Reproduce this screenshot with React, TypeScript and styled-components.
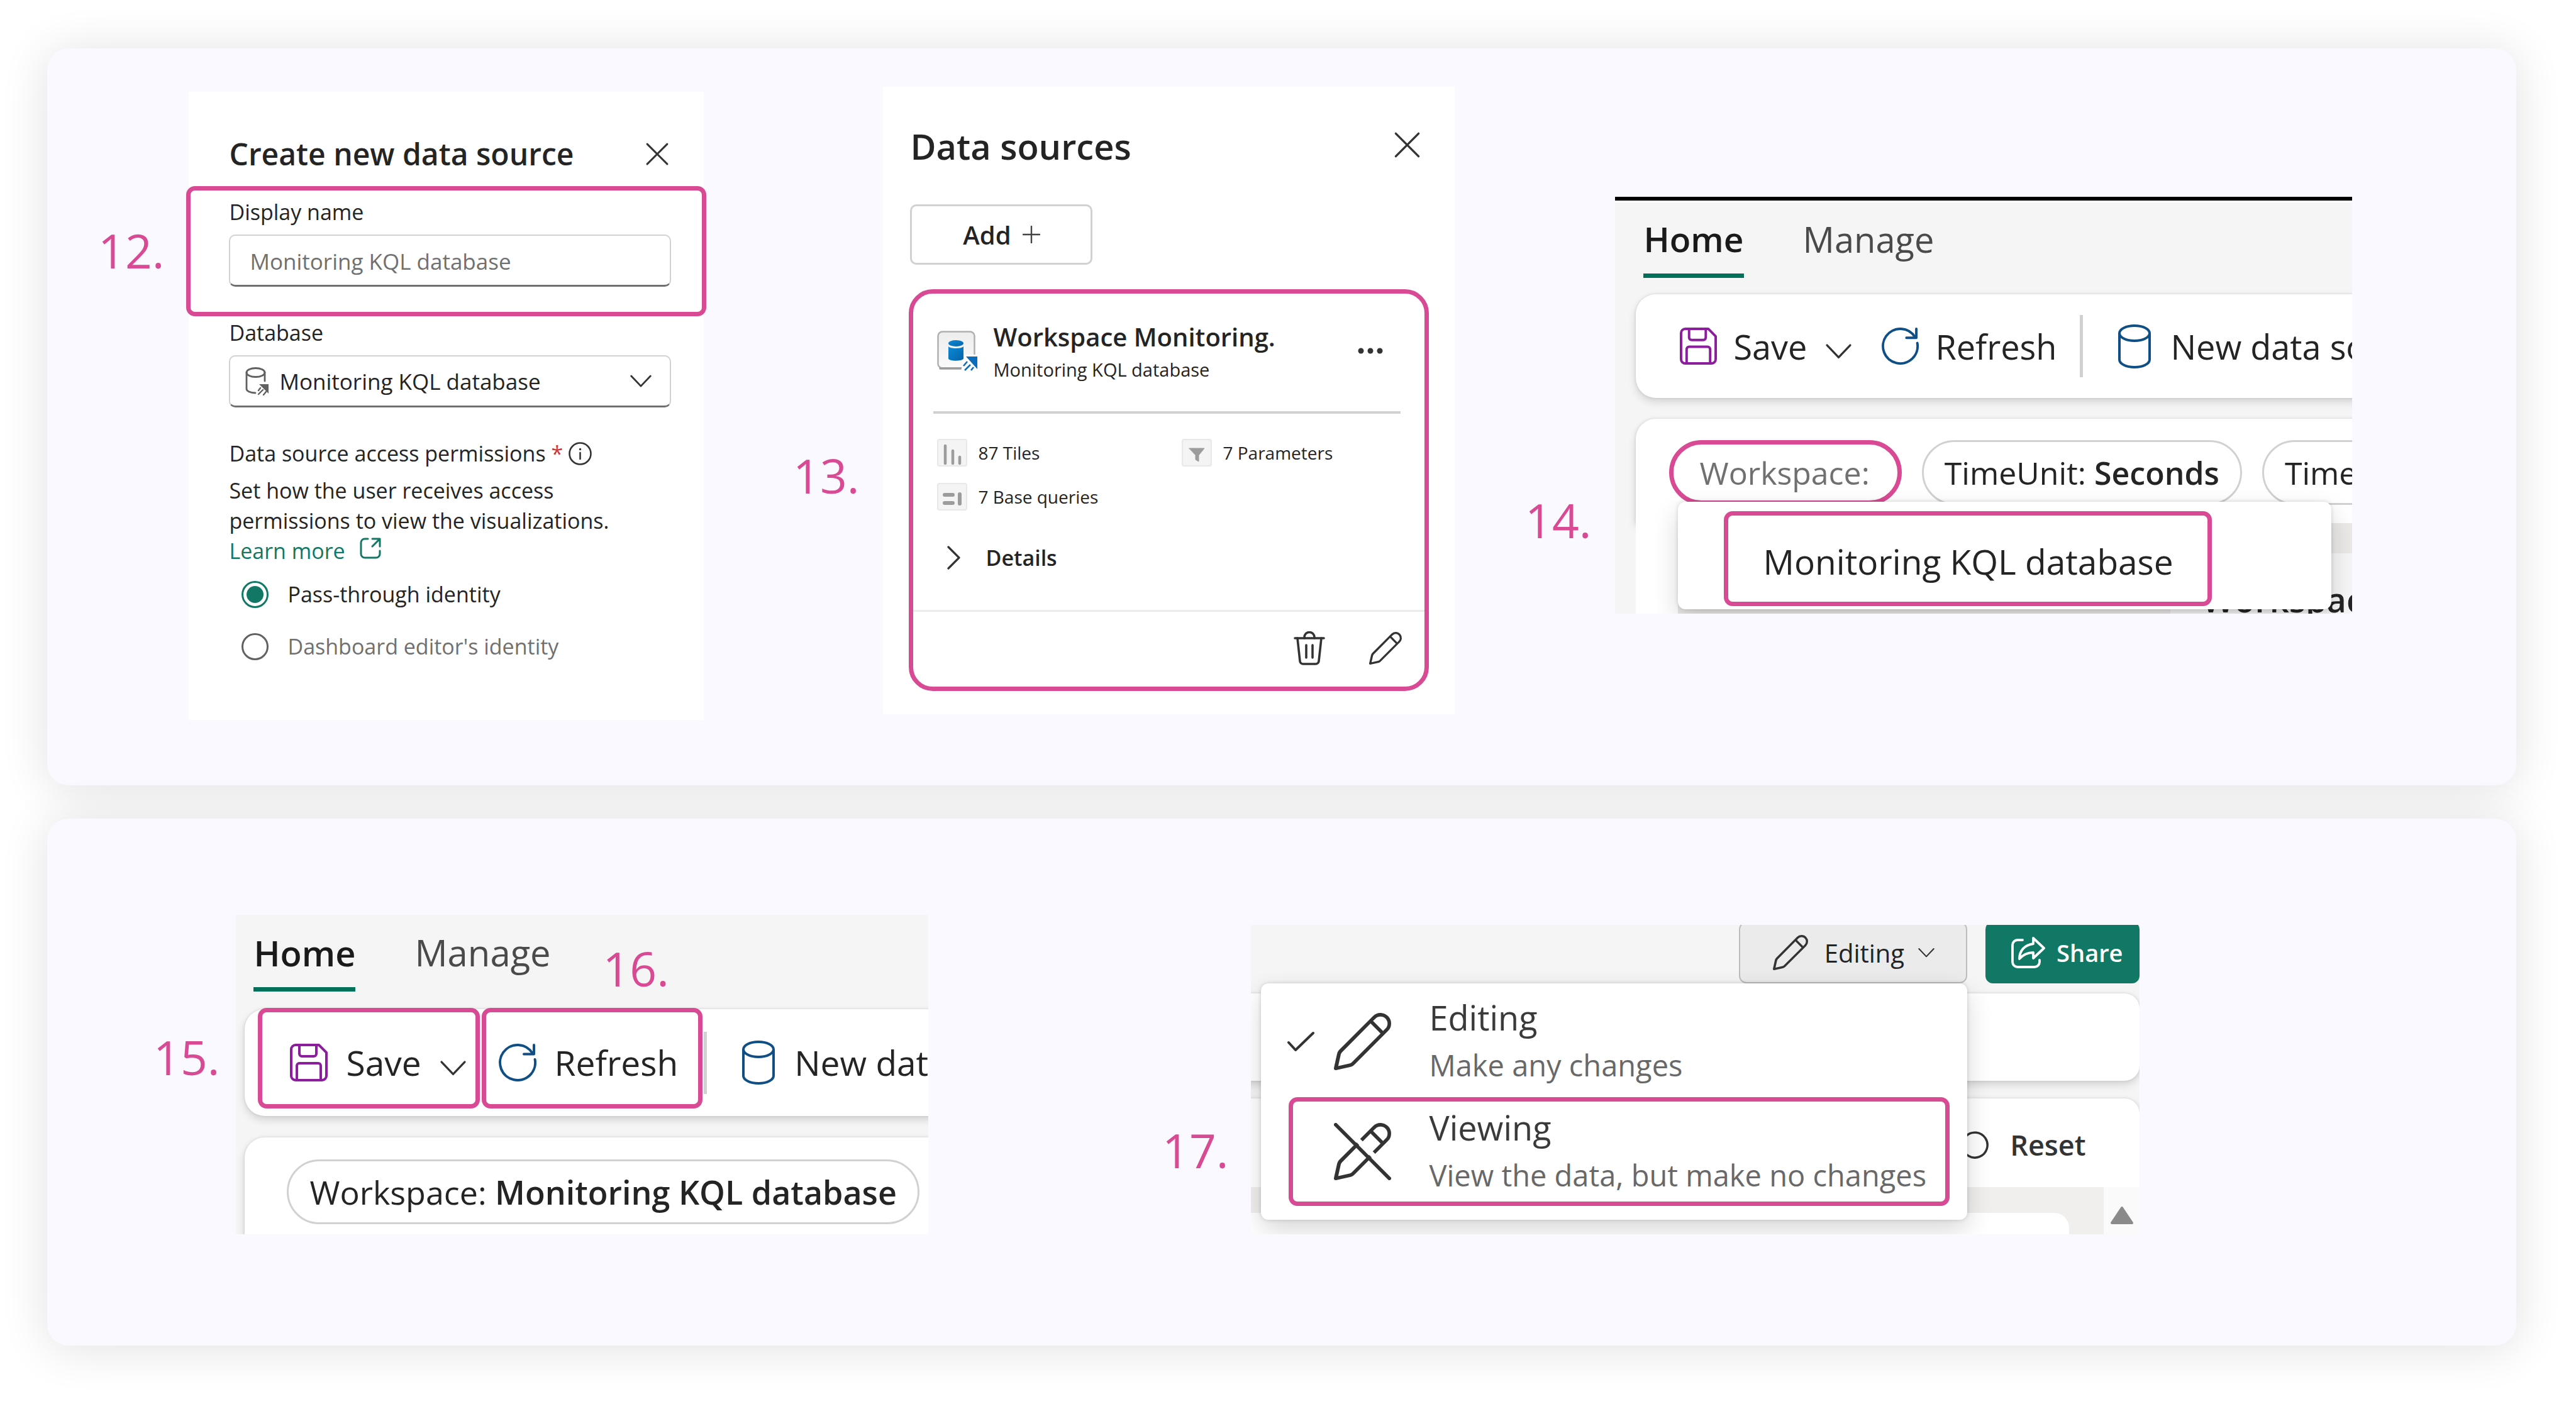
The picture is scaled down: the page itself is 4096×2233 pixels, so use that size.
import React from "react";
import styled, { createGlobalStyle, css } from "styled-components";

const color = {
  accent: "#d84b94",
  ink: "#242424",
  muted: "#707070",
  green: "#117865",
  line: "#d1d1d1",
  blue: "#0f4f85",
  purple: "#8c1d9c",
};

const GlobalStyle = createGlobalStyle`
  *, *::before, *::after { box-sizing: border-box; }
  body { margin: 0; background: #ffffff; }
  body, button, input, select {
    font-family: "Open Sans", "Noto Sans", sans-serif;
    color: ${color.ink};
  }
  button { background: none; border: 0; padding: 0; margin: 0; cursor: pointer; }
  h2, h3, p, fieldset, figure { margin: 0; padding: 0; border: 0; font-weight: 400; }
  svg { display: block; flex: none; }
`;

/* ---------- page ---------- */

const Page = styled.main`
  display: flex;
  flex-direction: column;
  gap: 53px;
  padding: 77px 95px 93px 75px;
`;

const Panel = styled.section<{ $columns: string; $pad: string }>`
  display: grid;
  grid-template-columns: ${(p) => p.$columns};
  align-items: start;
  padding: ${(p) => p.$pad};
  background: #f9f9ff;
  border-radius: 34px;
  box-shadow: 0 5px 76px rgba(0, 0, 0, 0.12);
`;

const Step = styled.div<{ $gap: number }>`
  display: flex;
  align-items: flex-start;
  gap: ${(p) => p.$gap}px;
`;

const StepNumber = styled.span<{ $drop: number }>`
  flex: none;
  margin-top: ${(p) => p.$drop}px;
  font-size: 75px;
  font-weight: 500;
  line-height: 100px;
  color: ${color.accent};
`;

const FloatingNumber = styled(StepNumber)`
  position: absolute;
  z-index: 2;
  top: 35px;
  left: 583px;
  margin-top: 0;
`;

const Callout = styled.span<{ $inset: string; $radius?: number }>`
  position: absolute;
  inset: ${(p) => p.$inset};
  border: 7px solid ${color.accent};
  border-radius: ${(p) => p.$radius ?? 14}px;
  pointer-events: none;
`;

const Sheet = styled.section<{ $width: number; $drop?: number; $pad: string }>`
  flex: 0 1 ${(p) => p.$width}px;
  margin-top: ${(p) => p.$drop ?? 0}px;
  padding: ${(p) => p.$pad};
  background: #ffffff;
`;

const Clip = styled.figure<{ $width: number; $height: number; $drop?: number }>`
  position: relative;
  flex: 0 1 ${(p) => p.$width}px;
  height: ${(p) => p.$height}px;
  margin-top: ${(p) => p.$drop ?? 0}px;
  overflow: hidden;
  background: #f5f5f5;
`;

const IconButton = styled.button`
  display: flex;
  flex: none;
  align-items: center;
  justify-content: center;
`;

/* ---------- icons ---------- */

type IconProps = { size: number; stroke?: string };

const Cross = ({ size }: IconProps) => (
  <svg width={size} height={size} viewBox="0 0 34 34" fill="none" stroke="#333" strokeWidth="2.8" strokeLinecap="round">
    <path d="M2 2l30 30M32 2L2 32" />
  </svg>
);

const ChevronDown = ({ size }: IconProps) => (
  <svg width={size} height={size / 2 + 4} viewBox="0 0 40 24" fill="none" stroke="#333" strokeWidth="3.2" strokeLinecap="round" strokeLinejoin="round">
    <path d="M2 2l18 19L38 2" />
  </svg>
);

const ChevronRight = () => (
  <svg width="21" height="38" viewBox="0 0 21 38" fill="none" stroke="#333" strokeWidth="3.2" strokeLinecap="round" strokeLinejoin="round">
    <path d="M2 2l17 17L2 36" />
  </svg>
);

const Plus = () => (
  <svg width="28" height="28" viewBox="0 0 28 28" fill="none" stroke="#444" strokeWidth="2.4" strokeLinecap="round">
    <path d="M14 1v26M1 14h26" />
  </svg>
);

const SaveIcon = ({ size }: IconProps) => (
  <svg width={size} height={size} viewBox="0 0 60 60" fill="none" stroke={color.purple} strokeWidth="4" strokeLinejoin="round">
    <path d="M9 2h37l12 12v37a7 7 0 0 1-7 7H9a7 7 0 0 1-7-7V9a7 7 0 0 1 7-7z" />
    <path d="M15 2v14a4 4 0 0 0 4 4h19a4 4 0 0 0 4-4V2" />
    <path d="M11 58V35a4 4 0 0 1 4-4h30a4 4 0 0 1 4 4v23" />
  </svg>
);

const RefreshIcon = ({ size }: IconProps) => (
  <svg width={size} height={size} viewBox="0 0 60 60" fill="none" stroke={color.blue} strokeWidth="4" strokeLinecap="round" strokeLinejoin="round">
    <path d="M57.6 25A28 28 0 1 1 54 15.500" />
    <path d="M56 2v14.500H40" />
  </svg>
);

const DatabaseIcon = ({ size }: IconProps) => (
  <svg width={size} height={(size * 70) / 52} viewBox="0 0 52 70" fill="none" stroke={color.blue} strokeWidth="4">
    <ellipse cx="26" cy="14" rx="24" ry="12" />
    <path d="M2 14v42c0 6.600 10.700 12 24 12s24-5.400 24-12V14" />
  </svg>
);

const PENCIL =
  "M17.18 2.93a2.97 2.97 0 0 0-4.26-.06l-9.37 9.38c-.33.33-.56.74-.66 1.200l-.88 3.940a.5.5 0 0 0 .6.6l3.920-.87c.46-.1.89-.34 1.220-.68l9.370-9.370a2.970 2.970 0 0 0 .06-4.140Zm-3.550.65a1.970 1.970 0 0 1 2.790 2.790l-.68.68-2.800-2.800.69-.67Zm-1.390 1.380 2.800 2.800-7.990 7.980c-.2.2-.45.34-.73.4l-3.120.7.69-3.100c.06-.28.2-.54.4-.75l7.950-8.030Z";

const PencilIcon = ({ size }: IconProps) => (
  <svg width={size} height={size} viewBox="2 2 16 16" fill="#333">
    <path d={PENCIL} />
  </svg>
);

const PencilOffIcon = ({ size }: IconProps) => (
  <svg width={size} height={size} viewBox="2 2 16 16" fill="#333">
    <path d={PENCIL} />
    <path d="M3.400 1.500L18.800 16.900" stroke="#fff" strokeWidth="1.400" />
    <path d="M2.500 2.500l15 15" stroke="#333" strokeWidth="1" strokeLinecap="round" />
  </svg>
);

const TrashIcon = () => (
  <svg width="50" height="54" viewBox="0 0 50 54" fill="none" stroke="#333" strokeWidth="3.600" strokeLinecap="round" strokeLinejoin="round">
    <path d="M2 11h46" />
    <path d="M17 11V9.500a8 8 0 0 1 16 0V11" />
    <path d="M6 11l4 36.500a5 5 0 0 0 5 4.500h20a5 5 0 0 0 5-4.500L44 11" />
    <path d="M20 22v20M30 22v20" />
  </svg>
);

const InfoIcon = () => (
  <svg width="37" height="37" viewBox="0 0 37 37" fill="none" stroke="#333" strokeWidth="2.600">
    <circle cx="18.500" cy="18.500" r="17" />
    <path d="M18.500 17v10" strokeLinecap="round" />
    <circle cx="18.500" cy="11.500" r="1" fill="#333" strokeWidth="1.500" />
  </svg>
);

const OpenIcon = () => (
  <svg width="34" height="34" viewBox="0 0 34 34" fill="none" stroke={color.green} strokeWidth="3" strokeLinecap="round" strokeLinejoin="round">
    <path d="M13 2H8a6 6 0 0 0-6 6v18a6 6 0 0 0 6 6h18a6 6 0 0 0 6-6v-5" />
    <path d="M20 2h12v12M32 2L20 14" />
  </svg>
);

const KqlIcon = () => (
  <svg width="38" height="45" viewBox="0 0 38 45" fill="none" stroke="#616161" strokeWidth="2.800" strokeLinecap="round">
    <ellipse cx="16.500" cy="8.500" rx="14.500" ry="7" />
    <path d="M2 8.500v26c0 3.500 6 6.500 14 6.500M31 8.500V22" />
    <path d="M22 27h15v15z" fill="#616161" stroke="none" />
    <path d="M24 33l-3 4M28 36l-7 7M33 39l-4 5" strokeWidth="2.400" />
  </svg>
);

const KqlTileIcon = () => (
  <svg width="64" height="64" viewBox="0 0 64 64">
    <defs>
      <linearGradient id="kqlFace" x1="0" y1="0" x2="0" y2="1">
        <stop offset="0" stopColor="#ededed" />
        <stop offset="1" stopColor="#fafafa" />
      </linearGradient>
      <linearGradient id="kqlBlue" x1="0" y1="0" x2="1" y2="1">
        <stop offset="0" stopColor="#0a8ad8" />
        <stop offset="1" stopColor="#0563a8" />
      </linearGradient>
    </defs>
    <rect x="1.500" y="1.500" width="58" height="58" rx="7" fill="url(#kqlFace)" stroke="#b0b0b0" strokeWidth="2.500" />
    <path d="M5 60h45" stroke="#9a9a9a" strokeWidth="3.500" strokeLinecap="round" />
    <ellipse cx="30" cy="20" rx="12" ry="5" fill="url(#kqlBlue)" />
    <path d="M18 25c3 4 21 4 24 0v19c0 5-24 5-24 0z" fill="url(#kqlBlue)" />
    <path d="M38 64L64 64V38H44z" fill="#fff" />
    <path d="M46 41h18v20z" fill="#0a6ebd" />
    <path d="M48 49l-6 7M53 54l-9 9M58 58l-4 5" stroke="#0a6ebd" strokeWidth="2.600" />
  </svg>
);

const StatIcon = ({ children }: { children: React.ReactNode }) => (
  <svg width="48" height="44" viewBox="0 0 48 44" fill="none" stroke="#9c9c9c" strokeLinecap="round">
    <rect x="1" y="1" width="46" height="42" rx="3" fill="#f4f4f4" stroke="#e8e8e8" strokeWidth="2" />
    {children}
  </svg>
);

const ShareIcon = () => (
  <svg width="54" height="50" viewBox="0 0 54 50" fill="none" stroke="#fff" strokeWidth="3.800" strokeLinecap="round" strokeLinejoin="round">
    <path d="M18 5h-8a8 8 0 0 0-8 8v27a8 8 0 0 0 8 8h27a8 8 0 0 0 8-8v-3" />
    <path d="M35 2l17 16-17 16v-9c-10 0-16 3-22 10 0-13 8-22 22-24z" />
  </svg>
);

const CheckIcon = () => (
  <svg width="43" height="33" viewBox="0 0 43 33" fill="none" stroke="#333" strokeWidth="4" strokeLinecap="round" strokeLinejoin="round">
    <path d="M2 18l11 12L41 3" />
  </svg>
);

const MoreIcon = () => (
  <svg width="40" height="10" viewBox="0 0 40 10" fill="#333">
    <circle cx="5" cy="5" r="4.500" />
    <circle cx="20" cy="5" r="4.500" />
    <circle cx="35" cy="5" r="4.500" />
  </svg>
);

/* ---------- create data source form ---------- */

const SheetHead = styled.header`
  display: flex;
  align-items: center;
  justify-content: space-between;
  padding-right: 4px;
`;

const FormTitle = styled.h2`
  font-size: 48px;
  font-weight: 600;
  line-height: 64px;
`;

const Field = styled.div<{ $top: number }>`
  position: relative;
  display: flex;
  flex-direction: column;
  gap: 12px;
  margin-top: ${(p) => p.$top}px;
`;

const bodyText = css`
  font-size: 34px;
  line-height: 48px;
`;

const FieldLabel = styled.label`
  ${bodyText}
`;

const control = css`
  width: 100%;
  height: 83px;
  border: 2px solid ${color.line};
  border-bottom: 3px solid #707070;
  border-radius: 10px;
  background: #ffffff;
  outline: 0;
  font-size: 35px;
  line-height: 48px;
`;

const TextInput = styled.input`
  ${control}
  padding: 3px 31px 0;
  &::placeholder { color: ${color.muted}; opacity: 1; }
`;

const SelectBox = styled.div`
  position: relative;
`;

const Select = styled.select`
  ${control}
  display: block;
  appearance: none;
  padding: 2px 78px 0;
`;

const SelectMark = styled.span<{ $side: "left" | "right" }>`
  position: absolute;
  top: 0;
  bottom: 0;
  ${(p) => p.$side}: ${(p) => (p.$side === "left" ? 26 : 31)}px;
  display: flex;
  align-items: center;
  pointer-events: none;
`;

const Permissions = styled.fieldset`
  margin-top: 49px;
  min-width: 0;
`;

const Legend = styled.div`
  display: flex;
  align-items: center;
  gap: 9px;
  ${bodyText}
`;

const Required = styled.span`
  color: #d13438;
`;

const Hint = styled.p`
  margin-top: 11px;
  max-width: 640px;
  ${bodyText}
`;

const LearnMore = styled.a`
  display: flex;
  gap: 23px;
  color: ${color.green};
  text-decoration: none;
  svg { margin-top: 3px; }
`;

const RadioRow = styled.label<{ $top: number; $muted?: boolean }>`
  display: flex;
  align-items: center;
  gap: 30px;
  margin-top: ${(p) => p.$top}px;
  padding-left: 20px;
  ${bodyText}
  color: ${(p) => (p.$muted ? color.muted : color.ink)};
`;

const Radio = styled.input`
  appearance: none;
  display: grid;
  place-items: center;
  flex: none;
  width: 43px;
  height: 43px;
  margin: 0;
  border: 3px solid #616161;
  border-radius: 50%;
  &:checked { border-color: ${color.green}; }
  &:checked::before {
    content: "";
    width: 27px;
    height: 27px;
    border-radius: 50%;
    background: ${color.green};
  }
`;

const CreateForm = () => (
  <Sheet $width={819} $drop={8} $pad="67px 52px 93px 64px">
    <SheetHead>
      <FormTitle>Create new data source</FormTitle>
      <IconButton aria-label="Close"><Cross size={36} /></IconButton>
    </SheetHead>
    <Field $top={36}>
      <FieldLabel htmlFor="display-name">Display name</FieldLabel>
      <TextInput id="display-name" placeholder="Monitoring KQL database" />
      <Callout $inset="-17px -56px -47px -68px" />
    </Field>
    <Field $top={49}>
      <FieldLabel htmlFor="database">Database</FieldLabel>
      <SelectBox>
        <Select id="database">
          <option>Monitoring KQL database</option>
        </Select>
        <SelectMark $side="left"><KqlIcon /></SelectMark>
        <SelectMark $side="right"><ChevronDown size={34} /></SelectMark>
      </SelectBox>
    </Field>
    <Permissions>
      <Legend>
        <span>Data source access permissions <Required>*</Required></span>
        <InfoIcon />
      </Legend>
      <Hint>
        Set how the user receives access permissions to view the visualizations.
        <LearnMore href="#learn">Learn more <OpenIcon /></LearnMore>
      </Hint>
      <RadioRow $top={21}>
        <Radio type="radio" name="identity" defaultChecked />
        Pass-through identity
      </RadioRow>
      <RadioRow $top={35} $muted>
        <Radio type="radio" name="identity" />
        Dashboard editor's identity
      </RadioRow>
    </Permissions>
  </Sheet>
);

/* ---------- data sources list ---------- */

const ListTitle = styled.h2`
  font-size: 56px;
  font-weight: 600;
  line-height: 72px;
`;

const ListHead = styled(SheetHead)`
  padding-right: 12px;
  button { margin-bottom: 4px; }
`;

const AddButton = styled.button`
  display: flex;
  align-items: center;
  justify-content: center;
  gap: 18px;
  width: 290px;
  height: 96px;
  margin: 57px 0 39px;
  border: 3px solid ${color.line};
  border-radius: 10px;
  font-size: 40px;
  font-weight: 600;
`;

const SourceCard = styled.article`
  margin: 0 -2px;
  border: 7px solid ${color.accent};
  border-radius: 38px;
`;

const SourceBody = styled.div`
  padding: 45px 38px 59px 32px;
`;

const SourceHead = styled.header`
  display: flex;
  align-items: center;
  padding: 0 28px 42px 6px;
  border-bottom: 4px solid ${color.line};
  > svg, > button { margin-bottom: 8px; }
`;

const SourceNames = styled.div`
  display: grid;
  gap: 4px;
  flex: 1;
  margin-left: 25px;
`;

const SourceName = styled.h3`
  font-size: 40px;
  font-weight: 600;
  line-height: 48px;
`;

const SourceKind = styled.p`
  font-size: 29px;
  line-height: 48px;
`;

const Stats = styled.div`
  display: grid;
  grid-template-columns: 389px 1fr;
  row-gap: 26px;
  padding: 40px 0 51px 6px;
`;

const Stat = styled.div`
  display: flex;
  align-items: center;
  gap: 17px;
  font-size: 28px;
  line-height: 44px;
`;

const DetailsButton = styled.button`
  display: flex;
  align-items: center;
  gap: 40px;
  padding-left: 22px;
  ${bodyText}
  font-weight: 600;
`;

const SourceFoot = styled.footer`
  display: flex;
  align-items: center;
  justify-content: flex-end;
  gap: 70px;
  height: 122px;
  padding: 0 36px 4px 0;
  border-top: 3px solid #ebebeb;
`;

const SourceList = () => (
  <Sheet $width={909} $pad="58px 43px 37px">
    <ListHead>
      <ListTitle>Data sources</ListTitle>
      <IconButton aria-label="Close"><Cross size={41} /></IconButton>
    </ListHead>
    <AddButton>Add <Plus /></AddButton>
    <SourceCard>
      <SourceBody>
        <SourceHead>
          <KqlTileIcon />
          <SourceNames>
            <SourceName>Workspace Monitoring.</SourceName>
            <SourceKind>Monitoring KQL database</SourceKind>
          </SourceNames>
          <IconButton aria-label="More options"><MoreIcon /></IconButton>
        </SourceHead>
        <Stats>
          <Stat>
            <StatIcon><path d="M13 11v28M25 19v20M36 29v10" strokeWidth="4.500" /></StatIcon>
            87 Tiles
          </Stat>
          <Stat>
            <StatIcon><path d="M12 15h24l-9 11v10l-5-3v-7z" fill="#9c9c9c" strokeWidth="1" /></StatIcon>
            7 Parameters
          </Stat>
          <Stat>
            <StatIcon><path d="M12 19h13M12 32h13M36 18v15" strokeWidth="6" /></StatIcon>
            7 Base queries
          </Stat>
        </Stats>
        <DetailsButton><ChevronRight /> Details</DetailsButton>
      </SourceBody>
      <SourceFoot>
        <IconButton aria-label="Delete"><TrashIcon /></IconButton>
        <IconButton aria-label="Edit"><PencilIcon size={52} /></IconButton>
      </SourceFoot>
    </SourceCard>
  </Sheet>
);

/* ---------- dashboard ribbon ---------- */

const TopRule = styled.div`
  height: 9px;
  background: #000000;
  border-bottom: 3px solid #ffffff;
`;

const Tabs = styled.nav<{ $pad: string }>`
  display: flex;
  gap: 94px;
  padding: ${(p) => p.$pad};
`;

const Tab = styled.button<{ $active?: boolean; $size: number }>`
  padding-bottom: 19px;
  border-bottom: 7px solid ${(p) => (p.$active ? "#00705a" : "transparent")};
  font-size: ${(p) => p.$size}px;
  line-height: 72px;
  font-weight: ${(p) => (p.$active ? 600 : 400)};
  color: ${(p) => (p.$active ? "#1a1a1a" : "#4a4a4a")};
`;

const barSurface = css`
  background: #ffffff;
  box-shadow: 0 6px 14px rgba(0, 0, 0, 0.14), 0 0 4px rgba(0, 0, 0, 0.12);
`;

const Toolbar = styled.div<{ $margin: string; $height: number; $pad: number }>`
  display: flex;
  align-items: center;
  height: ${(p) => p.$height}px;
  margin: ${(p) => p.$margin};
  padding-left: ${(p) => p.$pad}px;
  border-radius: 32px;
  white-space: nowrap;
  ${barSurface}
`;

const ToolGroup = styled.div<{ $after: number }>`
  position: relative;
  display: flex;
  flex: none;
  align-items: center;
  gap: 30px;
  margin-right: ${(p) => p.$after}px;
`;

const Tool = styled.button<{ $size: number; $gap: number }>`
  display: flex;
  flex: none;
  align-items: center;
  gap: ${(p) => p.$gap}px;
  font-size: ${(p) => p.$size}px;
  line-height: 72px;
`;

const DropButton = styled(IconButton)`
  padding-top: 18px;
`;

const Divider = styled.span`
  flex: none;
  width: 5px;
  height: 99px;
  margin-right: 56px;
  background: ${color.line};
`;

const FilterBar = styled.div<{ $margin: string; $pad: string }>`
  display: flex;
  gap: 32px;
  height: 166px;
  margin: ${(p) => p.$margin};
  padding: ${(p) => p.$pad};
  border-radius: 32px 32px 0 0;
  white-space: nowrap;
  ${barSurface}
`;

const Chip = styled.button<{ $size: number; $marked?: boolean }>`
  flex: none;
  height: 103px;
  padding: 0 33px;
  border: 3px solid ${color.line};
  border-radius: 52px;
  font-size: ${(p) => p.$size}px;
  line-height: 72px;
  ${(p) =>
    p.$marked &&
    css`
      padding: 0 44px 0 41px;
      border: 7px solid ${color.accent};
      color: ${color.muted};
    `}
  b { font-weight: 600; }
`;

const Canvas = styled.div`
  height: 145px;
  margin: 0 0 0 33px;
  padding: 48px 0 0 850px;
  background: linear-gradient(90deg, #ffffff 0 67px, #eae9e7 67px);
`;

const CanvasTile = styled.h3`
  padding: 37px 0 0 50px;
  background: #f6f6f6;
  font-size: 54px;
  font-weight: 600;
  line-height: 72px;
`;

const Menu = styled.div<{ $left: number; $top: number; $width: number }>`
  position: absolute;
  z-index: 2;
  left: ${(p) => p.$left}px;
  top: ${(p) => p.$top}px;
  width: ${(p) => p.$width}px;
  border-radius: 12px;
  background: #ffffff;
  box-shadow: 0 16px 40px rgba(0, 0, 0, 0.16), 0 0 6px rgba(0, 0, 0, 0.16);
`;

const MenuOption = styled.button`
  display: block;
  height: 151px;
  margin: 15px 0 5px 73px;
  padding: 8px 54px 0 55px;
  border: 7px solid ${color.accent};
  border-radius: 14px;
  font-size: 55px;
  line-height: 72px;
`;

const Ribbon = ({
  size,
  icon,
  gap,
  after,
  height,
  margin,
  pad,
  marked,
}: {
  size: number;
  icon: number;
  gap: number;
  after: [number, number];
  height: number;
  margin: string;
  pad: number;
  marked?: boolean;
}) => (
  <Toolbar $margin={margin} $height={height} $pad={pad}>
    <ToolGroup $after={after[0]}>
      <Tool $size={size} $gap={gap}><SaveIcon size={icon} /> Save</Tool>
      <DropButton aria-label="Save options"><ChevronDown size={41} /></DropButton>
      {marked && <Callout $inset="-51px -22px -37px -51px" />}
    </ToolGroup>
    <ToolGroup $after={after[1]}>
      <Tool $size={size} $gap={gap}><RefreshIcon size={icon} /> Refresh</Tool>
      {marked && <Callout $inset="-51px -39px -37px -27px" />}
    </ToolGroup>
    <Divider />
    <Tool $size={size} $gap={31}><DatabaseIcon size={52} /> New data source</Tool>
  </Toolbar>
);

const ParameterClip = () => (
  <Clip $width={1172} $height={663} $drop={175}>
    <TopRule />
    <Tabs $pad="22px 0 26px 45px">
      <Tab $active $size={55}>Home</Tab>
      <Tab $size={56}>Manage</Tab>
    </Tabs>
    <Ribbon size={54} icon={59} gap={26} after={[48, 37]} height={165} margin="0 -40px 0 33px" pad={70} />
    <FilterBar $margin="33px -40px 0 33px" $pad="34px 0 0 53px">
      <Chip $size={50} $marked>Workspace:</Chip>
      <Chip $size={50}>TimeUnit: <b>Seconds</b></Chip>
      <Chip $size={50}>TimeRange</Chip>
    </FilterBar>
    <Canvas>
      <CanvasTile>Workspace</CanvasTile>
    </Canvas>
    <Menu $left={100} $top={485} $width={1039}>
      <MenuOption>Monitoring KQL database</MenuOption>
    </Menu>
  </Clip>
);

const SaveClip = () => (
  <Clip $width={1101} $height={508}>
    <Tabs $pad="24px 0 28px 28px">
      <Tab $active $size={56}>Home</Tab>
      <Tab $size={58}>Manage</Tab>
    </Tabs>
    <Ribbon size={55} icon={60} gap={29} after={[52, 41]} height={170} margin="0 -40px 0 14px" pad={72} marked />
    <FloatingNumber $drop={0}>16.</FloatingNumber>
    <FilterBar $margin="34px -40px 0 14px" $pad="35px 0 0 67px">
      <Chip $size={52}>Workspace: <b>Monitoring KQL database</b></Chip>
    </FilterBar>
  </Clip>
);

/* ---------- editing / viewing switch ---------- */

const ModeBar = styled.div`
  display: flex;
  align-items: flex-end;
  justify-content: flex-end;
  gap: 29px;
  height: 93px;
`;

const ModeButton = styled.button`
  display: flex;
  align-items: center;
  height: 98px;
  padding: 0 50px 0 52px;
  border: 2px solid #bdbdbd;
  border-radius: 12px;
  background: #ebebeb;
  font-size: 40px;
`;

const ModeLabel = styled.span`
  margin: 0 22px 0 26px;
`;

const ShareButton = styled.button`
  display: flex;
  align-items: center;
  gap: 18px;
  height: 98px;
  padding: 0 27px 0 41px;
  border-radius: 12px;
  background: ${color.green};
  color: #ffffff;
  font-size: 38px;
  font-weight: 600;
`;

const BackBar = styled.div<{ $top: number; $height: number; $radius: string }>`
  display: flex;
  align-items: center;
  justify-content: flex-end;
  height: ${(p) => p.$height}px;
  margin-top: ${(p) => p.$top}px;
  margin-left: -40px;
  padding: 6px 86px 0 0;
  border-radius: ${(p) => p.$radius};
  ${barSurface}
`;

const ResetButton = styled.button`
  display: flex;
  align-items: center;
  gap: 34px;
  font-size: 45px;
  font-weight: 600;
  color: #333333;
`;

const ScrollArea = styled.div`
  display: flex;
  height: 75px;
`;

const ScrollContent = styled.div`
  flex: 1;
  padding: 41px 55px 0 0;
  background: #f0efed;
`;

const ScrollTile = styled.div`
  height: 60px;
  border-radius: 0 24px 0 0;
  background: #ffffff;
`;

const ScrollTrack = styled.div`
  display: flex;
  justify-content: center;
  width: 57px;
  padding-top: 30px;
  background: #fafafa;
`;

const ModeMenu = styled(Menu)`
  display: grid;
  gap: 27px;
  padding: 18px 0 35px;
`;

const ModeItem = styled.button`
  position: relative;
  display: grid;
  grid-template-columns: 43px 91px 1fr;
  column-gap: 31px;
  align-items: center;
  padding-left: 42px;
  text-align: left;
`;

const ModeText = styled.span`
  display: grid;
  gap: 4px;
  margin-left: 29px;
  line-height: 72px;
  white-space: nowrap;
`;

const ModeName = styled.span`
  font-size: 54px;
  color: #3a3a3a;
`;

const ModeHint = styled.span`
  font-size: 47px;
  color: #686868;
`;

const ModeClip = () => (
  <Clip $width={1413} $height={492} $drop={16}>
    <ModeBar>
      <ModeButton>
        <PencilIcon size={56} />
        <ModeLabel>Editing</ModeLabel>
        <ChevronDown size={26} />
      </ModeButton>
      <ShareButton><ShareIcon /> Share</ShareButton>
    </ModeBar>
    <BackBar $top={16} $height={139} $radius="24px" />
    <BackBar $top={28} $height={141} $radius="0 24px 0 0">
      <ResetButton>
        <svg width="44" height="44" viewBox="0 0 44 44" fill="none" stroke="#333" strokeWidth="3.500" strokeLinecap="round">
          <path d="M8 8A20 20 0 1 1 2.500 26M2 1v8h6" />
        </svg>
        Reset
      </ResetButton>
    </BackBar>
    <ScrollArea>
      <ScrollContent><ScrollTile /></ScrollContent>
      <ScrollTrack>
        <svg width="38" height="30" viewBox="0 0 38 30" fill="#8a8a8a" stroke="#8a8a8a" strokeWidth="4" strokeLinejoin="round">
          <path d="M19 3L35 27H3z" />
        </svg>
      </ScrollTrack>
    </ScrollArea>
    <ModeMenu $left={16} $top={93} $width={1123}>
      <ModeItem>
        <CheckIcon />
        <PencilIcon size={91} />
        <ModeText>
          <ModeName>Editing</ModeName>
          <ModeHint>Make any changes</ModeHint>
        </ModeText>
      </ModeItem>
      <ModeItem>
        <span />
        <PencilOffIcon size={91} />
        <ModeText>
          <ModeName>Viewing</ModeName>
          <ModeHint>View the data, but make no changes</ModeHint>
        </ModeText>
        <Callout $inset="-12px 28px -13px 44px" />
      </ModeItem>
    </ModeMenu>
  </Clip>
);

export default function App() {
  return (
    <>
      <GlobalStyle />
      <Page>
        <Panel $columns="1105fr 1164fr 1576fr" $pad="61px 0 104px 81px">
          <Step $gap={39}>
            <StepNumber $drop={210}>12.</StepNumber>
            <CreateForm />
          </Step>
          <Step $gap={38}>
            <StepNumber $drop={568}>13.</StepNumber>
            <SourceList />
          </Step>
          <Step $gap={38}>
            <StepNumber $drop={639}>14.</StepNumber>
            <ParameterClip />
          </Step>
        </Panel>
        <Panel $columns="1604fr 2153fr" $pad="153px 0 177px 169px">
          <Step $gap={26}>
            <StepNumber $drop={176}>15.</StepNumber>
            <SaveClip />
          </Step>
          <Step $gap={36}>
            <StepNumber $drop={324}>17.</StepNumber>
            <ModeClip />
          </Step>
        </Panel>
      </Page>
    </>
  );
}
